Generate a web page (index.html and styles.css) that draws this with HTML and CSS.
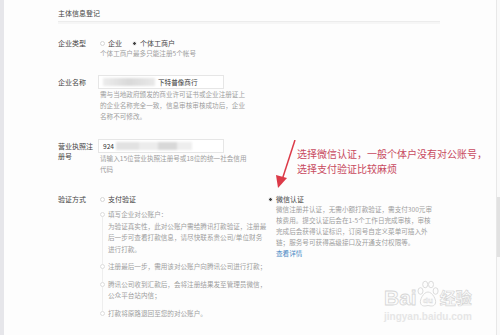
FILE: index.html
```html
<!DOCTYPE html>
<html lang="zh-CN">
<head>
  <meta charset="UTF-8" />
  <meta name="viewport" content="width=device-width, initial-scale=1.0"/>
  <title>主体信息登记</title>
  <link rel="stylesheet" href="styles.css">
</head>
<body>
  <div class="app">
    <div class="rail"></div>

    <div class="main">
      <div class="section-title">主体信息登记</div>

      <div class="form-row row-type">
        <div class="label">企业类型</div>
        <div class="field">
          <div class="radios">
            <span class="opt"><i class="radio"></i>企业</span>
            <span class="opt"><i class="radio on"></i>个体工商户</span>
          </div>
          <div class="hint">个体工商户最多只能注册5个帐号</div>
        </div>
      </div>

      <div class="form-row row-name">
        <div class="label label-input">企业名称</div>
        <div class="field">
          <div class="input"><span class="mask mask-name"></span>下特普像商行</div>
          <div class="hint hint-wide">需与当地政府颁发的商业许可证书或企业注册证上的企业名称完全一致，信息审核审核成功后，企业名称不可修改。</div>
        </div>
      </div>

      <div class="form-row row-license">
        <div class="label label-wrap">营业执照注册号</div>
        <div class="field">
          <div class="input">924<span class="mask mask-num"></span></div>
          <div class="hint hint-wide">请输入15位营业执照注册号或18位的统一社会信用代码</div>
        </div>
      </div>

      <div class="form-row row-verify">
        <div class="label">验证方式</div>
        <div class="field options">
          <div class="option option-pay">
            <div class="opt-head"><i class="radio"></i>支付验证</div>
            <ul class="steps">
              <li>填写企业对公账户：<br>为验证真实性，此对公账户需给腾讯打款验证，注册最后一步可查看打款信息，请尽快联系贵公司/单位财务进行打款。</li>
              <li>注册最后一步，需用该对公账户向腾讯公司进行打款；</li>
              <li>腾讯公司收到汇款后，会将注册结果发至管理员微信，公众平台站内信；</li>
              <li>打款将原路退回至您的对公账户。</li>
            </ul>
          </div>
          <div class="option option-wx">
            <div class="opt-head"><i class="radio on"></i>微信认证</div>
            <div class="opt-desc">微信注册并认证，无需小额打款验证，需支付300元审核费用。提交认证后会在1-5个工作日完成审核，审核完成后会获得认证标识，订阅号自定义菜单可插入外链；服务号可获得高级接口及开通支付权限等。</div>
            <a class="more" href="#">查看详情</a>
          </div>
        </div>
      </div>
    </div>

    <div class="scroll"><div class="thumb"></div></div>
  </div>

  <!-- 截图上的标注 -->
  <svg class="arrow" width="30" height="60" viewBox="0 0 30 60">
    <line x1="23" y1="0" x2="10" y2="40" stroke="#dc3a48" stroke-width="1.5"/>
    <polygon points="6,48 4,35 15,38" fill="#dc3a48"/>
  </svg>
  <div class="note">选择微信认证，一般个体户没有对公账号，<br>选择支付验证比较麻烦</div>

  <div class="watermark">
    <div class="wm-logo">
      <span class="wm-bai">Bai</span>
      <svg class="wm-paw" width="22" height="28" viewBox="0 0 22 28">
        <g fill="none" stroke="#d8d8d8" stroke-width="0.9">
          <ellipse cx="3.5" cy="11" rx="2.5" ry="3.3"/>
          <ellipse cx="8.2" cy="4.5" rx="2.5" ry="3.3"/>
          <ellipse cx="14" cy="4.5" rx="2.5" ry="3.3"/>
          <ellipse cx="18.6" cy="11" rx="2.5" ry="3.3"/>
          <path d="M11 12 C6.5 12 2.5 20 3.5 23 C4.5 27 8.5 26 11 25.5 C13.5 26 17.5 27 18.5 23 C19.5 20 15.5 12 11 12 Z"/>
        </g>
        <text x="11" y="23" text-anchor="middle" class="wm-du">du</text>
      </svg>
      <span class="wm-cn">经验</span>
    </div>
    <div class="wm-url">jingyan.baidu.com</div>
  </div>
</body>
</html>
```

FILE: styles.css
```css
body {
  margin: 0;
  background: #fdfdfd;
  font-family: "Noto Sans CJK SC", "Noto Sans", sans-serif;
  color: #555;
}

.app {
  display: flex;
  width: 500px;
  height: 335px;
  overflow: hidden;
}

.rail {
  width: 4px;
  background: #e6e6ea;
}

.main {
  flex: 1;
  padding: 8px 0 0 54px;
}

.scroll {
  width: 3px;
  border-left: 1px solid #e8e8e8;
  background: #fafafa;
}
.thumb {
  margin-top: 197px;
  height: 60px;
  background: #e2e2e2;
}

.section-title {
  width: 382px;
  font-size: 7px;
  line-height: 10px;
  color: #444;
  padding-bottom: 3px;
  border-bottom: 1px solid #ececec;
  box-shadow: 0 2px 0 #f6f6f6;
}

.form-row {
  display: flex;
}
.row-type { margin-top: 16px; }
.row-name { margin-top: 16px; }
.row-license { margin-top: 17px; }
.row-verify { margin-top: 19px; }

.label {
  width: 36px;
  margin-right: 6px;
  font-size: 7px;
  line-height: 10px;
  color: #444;
}
.label-input { line-height: 14px; }
.label-wrap { padding-top: 2px; }

.field {
  font-size: 6.6px;
}

.radios {
  display: flex;
  line-height: 10px;
  font-size: 7px;
  color: #444;
}
.opt {
  display: flex;
  align-items: center;
  margin-right: 10px;
}

.radio {
  display: inline-block;
  width: 5px;
  height: 5px;
  box-sizing: border-box;
  border: 1px solid #d6d6d6;
  border-radius: 50%;
  background: #fff;
  margin-right: 3px;
}
.radio.on {
  border-color: #ececec;
  background: radial-gradient(circle, #444 0 1.2px, #fff 1.7px);
}

.hint {
  color: #9e9e9e;
  line-height: 11px;
}
.hint-wide { width: 148px; }

.input {
  width: 126px;
  height: 14px;
  box-sizing: border-box;
  margin-left: -2px;
  padding-left: 4px;
  border: 1px solid #e6e6e6;
  background: #fff;
  display: flex;
  align-items: center;
  font-size: 6.6px;
  color: #333;
}
.mask {
  display: inline-block;
  height: 8px;
  filter: blur(1px);
}
.mask-name {
  width: 52px;
  margin-right: 3px;
  background: linear-gradient(90deg, #ededed, #d9d9d9 50%, #e9e9e9);
}
.mask-num {
  width: 76px;
  margin-left: 2px;
  background: linear-gradient(90deg, #e2e2e2 0 30%, #ececec 30% 55%, #d8d8d8 55% 80%, #eeeeee 80%);
}

.options {
  display: flex;
}
.option-pay { width: 168px; }
.option-wx { width: 166px; }

.opt-head {
  display: flex;
  align-items: center;
  font-size: 7px;
  line-height: 10px;
  color: #444;
}

.steps {
  position: relative;
  list-style: none;
  margin: 5px 0 0;
  padding: 0;
  color: #9e9e9e;
  line-height: 11.5px;
}
.steps::before {
  content: "";
  position: absolute;
  left: 2px;
  top: 4px;
  bottom: 4px;
  border-left: 1px solid #eeeeee;
}
.steps li {
  position: relative;
  padding-left: 8px;
  width: 160px;
  margin-bottom: 6px;
}
.steps li::before {
  content: "";
  position: absolute;
  left: 0;
  top: 3px;
  width: 5px;
  height: 5px;
  box-sizing: border-box;
  border: 1px solid #dddddd;
  border-radius: 50%;
  background: #fff;
}

.opt-desc {
  width: 158px;
  padding-left: 8px;
  color: #9e9e9e;
  line-height: 11px;
}
.more {
  display: block;
  padding-left: 8px;
  line-height: 11px;
  color: #4b88c4;
  text-decoration: none;
}

.arrow {
  position: absolute;
  left: 272px;
  top: 140px;
}

.note {
  position: absolute;
  left: 297px;
  top: 146px;
  font-size: 10px;
  line-height: 15px;
  color: #c84a60;
  white-space: nowrap;
}

.watermark {
  position: absolute;
  left: 384px;
  top: 280px;
}
.wm-logo {
  display: flex;
  align-items: flex-end;
  height: 28px;
}
.wm-bai {
  font-family: "Liberation Sans", sans-serif;
  font-weight: bold;
  font-size: 21px;
  line-height: 21px;
  color: #fcfcfc;
  -webkit-text-stroke: 0.8px #d6d6d6;
}
.wm-paw { margin-right: 1px; }
.wm-du {
  font-family: "Liberation Sans", sans-serif;
  font-weight: bold;
  font-size: 8px;
  fill: #fcfcfc;
  stroke: #d6d6d6;
  stroke-width: 0.4;
}
.wm-cn {
  font-weight: bold;
  font-size: 16px;
  line-height: 21px;
  color: #fcfcfc;
  -webkit-text-stroke: 0.7px #d6d6d6;
}
.wm-url {
  margin-top: 3px;
  font-family: "Liberation Sans", sans-serif;
  font-weight: bold;
  font-size: 10px;
  line-height: 12px;
  color: #e6e6e6;
}
```
